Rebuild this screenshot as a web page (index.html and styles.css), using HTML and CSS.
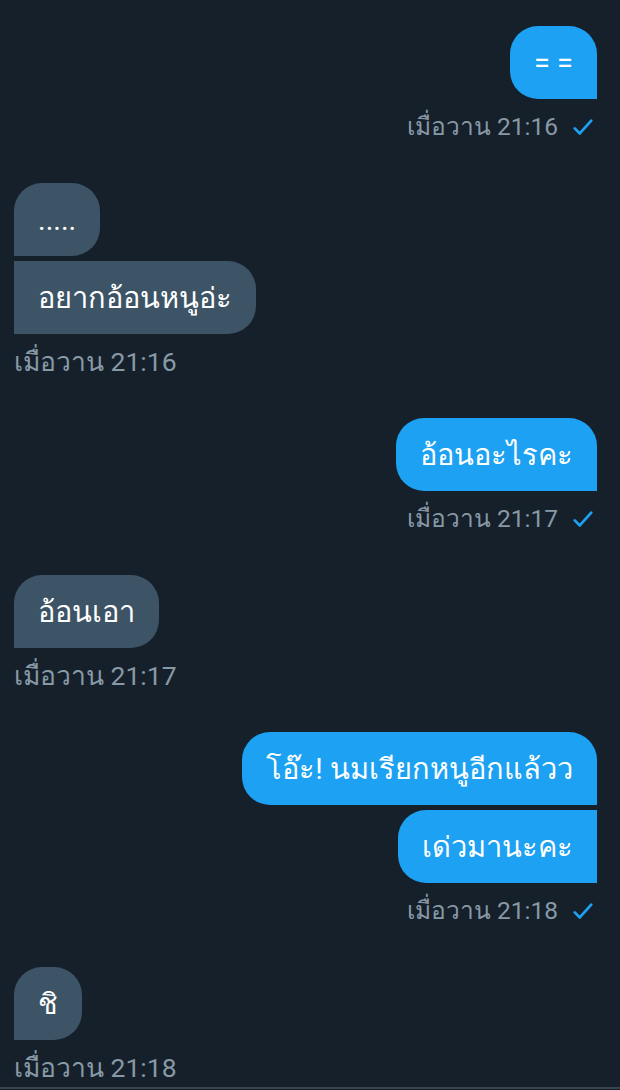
FILE: index.html
```html
<!DOCTYPE html>
<html lang="th">
<head>
    <meta charset="UTF-8">
    <meta name="viewport" content="width=device-width, initial-scale=1.0">
    <title>Messages</title>
    <link rel="stylesheet" href="styles.css">
</head>
<body>

    <div class="chat">
        <div class="group sent">
            <div class="bubble">= =</div>
            <div class="stamp">เมื่อวาน 21:16 <svg class="check" viewBox="0 0 24 24"><path d="M3 13.5l5.5 5.5L21 5"/></svg></div>
        </div>

        <div class="group received">
            <div class="bubble">.....</div>
            <div class="bubble">อยากอ้อนหนูอ่ะ</div>
            <div class="stamp">เมื่อวาน 21:16</div>
        </div>

        <div class="group sent">
            <div class="bubble">อ้อนอะไรคะ</div>
            <div class="stamp">เมื่อวาน 21:17 <svg class="check" viewBox="0 0 24 24"><path d="M3 13.5l5.5 5.5L21 5"/></svg></div>
        </div>

        <div class="group received">
            <div class="bubble">อ้อนเอา</div>
            <div class="stamp">เมื่อวาน 21:17</div>
        </div>

        <div class="group sent">
            <div class="bubble">โอ๊ะ! นมเรียกหนูอีกแล้วว</div>
            <div class="bubble">เด่วมานะคะ</div>
            <div class="stamp">เมื่อวาน 21:18 <svg class="check" viewBox="0 0 24 24"><path d="M3 13.5l5.5 5.5L21 5"/></svg></div>
        </div>

        <div class="group received">
            <div class="bubble">ชิ</div>
            <div class="stamp">เมื่อวาน 21:18</div>
        </div>
    </div>
    <div class="composer"></div>

</body>
</html>
```

FILE: styles.css
```css
body {
    margin: 0;
    background-color: #15202b;
    font-family: Roboto, sans-serif;
    height: 1090px;
    overflow: hidden;
    display: flex;
    flex-direction: column;
}
.chat {
    flex: 1;
    display: flex;
    flex-direction: column;
    gap: 42px;
    padding: 26px 23px 0 14px;
}
.group {
    display: flex;
    flex-direction: column;
    gap: 5px;
}
.group.sent {
    align-items: flex-end;
}
.group.received {
    align-items: flex-start;
}
.bubble {
    box-sizing: border-box;
    height: 73px;
    padding: 0 24px;
    display: flex;
    align-items: center;
    font-size: 29px;
    color: #ffffff;
    border-radius: 28px;
    white-space: nowrap;
}
.sent .bubble {
    background-color: #1da1f2;
    border-bottom-right-radius: 0;
}
.sent .bubble + .bubble {
    border-top-right-radius: 0;
}
.received .bubble {
    background-color: #3d5466;
    border-bottom-left-radius: 0;
}
.received .bubble + .bubble {
    border-top-left-radius: 0;
}
.stamp {
    margin-top: 9px;
    height: 28px;
    line-height: 28px;
    font-size: 24.5px;
    color: #8899a6;
    display: flex;
    align-items: center;
    gap: 14px;
}
.received .stamp {
    font-size: 26.5px;
}
.check {
    width: 22px;
    height: 22px;
    margin-right: 3px;
    fill: none;
    stroke: #1da1f2;
    stroke-width: 3;
    stroke-linecap: round;
    stroke-linejoin: round;
}
.composer {
    height: 2px;
    margin-bottom: 1px;
    background-color: #38444d;
}
```
